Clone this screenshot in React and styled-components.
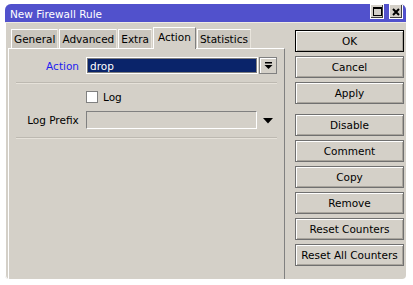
import React from 'react';
import styled, {createGlobalStyle} from "styled-components";

const GlobalStyle = createGlobalStyle`
    html, body {
        margin: 0;
        padding: 0;
        background: #ffffff;
    }
    body {
        font-family: "DejaVu Sans", Verdana, sans-serif;
        font-size: 10.5px;
    }
`

const Window = styled.div`
    margin: 4px 0 0 5px;
    width: 401px;
    height: 275px;
    background: #d4d0c8;
    border-radius: 6px 6px 4px 4px;
    overflow: hidden;
    display: flex;
    flex-direction: column;
    box-shadow: inset 1px 0 0 #ffffff;
`
const TitleBar = styled.div`
    height: 18px;
    flex: none;
    background: #5151cc;
    display: flex;
    align-items: center;
    padding: 0 3px 0 5px;
    color: #ffffff;
    font-size: 10.5px;
`
const Title = styled.span`
    flex: 1;
    line-height: 18px;
    padding-top: 1px;
`
const TitleButtons = styled.div`
    display: flex;
    gap: 5px;
    align-self: flex-start;
`
const TitleButton = styled.div`
    width: 12px;
    height: 13px;
    background: #d4d0c8;
    border: 1px solid #ffffff;
    box-shadow: inset -1px -1px 0 #404040;
    display: flex;
    align-items: center;
    justify-content: center;
`
const Body = styled.div`
    flex: 1;
    display: flex;
    padding: 3px 0 0 3px;
    border-top: 1px solid #eeeae2;
`
const LeftColumn = styled.div`
    width: 277px;
    display: flex;
    flex-direction: column;
`
const Tabs = styled.div`
    height: 22px;
    display: flex;
    align-items: flex-end;
    padding-left: 3px;
    gap: 1px;
`
const Tab = styled.div`
    height: ${p => p.$active ? 22 : 19}px;
    box-sizing: border-box;
    padding: 0 ${p => p.$active ? 4 : 2}px;
    display: flex;
    align-items: center;
    background: ${p => p.$active ? '#d4d0c8' : '#c9c5bd'};
    border-top: 1px solid #ffffff;
    border-left: 1px solid #ffffff;
    border-right: 1px solid ${p => p.$active ? '#808080' : '#e8e4dc'};
    margin-bottom: ${p => p.$active ? -1 : 0}px;
    padding-bottom: ${p => p.$active ? 3 : 0}px;
    position: relative;
    z-index: ${p => p.$active ? 1 : 0};
    color: #000000;
`
const Panel = styled.div`
    flex: 1;
    border-top: 1px solid #ffffff;
    border-left: 1px solid #ffffff;
    border-right: 1px solid #808080;
    padding: 0 7px;
    display: flex;
    flex-direction: column;
`
const Row = styled.div`
    display: flex;
    align-items: center;
    margin-top: ${p => p.$top}px;
`
const Label = styled.div`
    width: 63px;
    margin-right: 7px;
    text-align: right;
    color: ${p => p.$accent ? '#1c1cf0' : '#000000'};
`
const SelectField = styled.div`
    width: 172px;
    height: 17px;
    box-sizing: border-box;
    background: #0a246a;
    border: 1px solid #ffffff;
    box-shadow: inset 0 0 0 1px #7f7f7f;
    color: #ffffff;
    padding-left: 3px;
    display: flex;
    align-items: center;
`
const TextField = styled.div`
    width: 172px;
    height: 18px;
    box-sizing: border-box;
    border-top: 1px solid #808080;
    border-left: 1px solid #808080;
    border-bottom: 1px solid #ffffff;
    border-right: 1px solid #ffffff;
    background: #d4d0c8;
`
const DropButton = styled.div`
    width: 18px;
    height: 17px;
    margin-left: 1px;
    box-sizing: border-box;
    border: 1px solid #808080;
    box-shadow: inset 1px 1px 0 #ffffff;
    display: flex;
    align-items: center;
    justify-content: center;
`
const DropArrow = styled.div`
    width: 18px;
    margin-left: 2px;
    display: flex;
    justify-content: center;
    padding-top: 1px;
`
const Separator = styled.div`
    height: 0;
    border-top: 1px solid #bdb9b1;
    border-bottom: 1px solid #e6e2da;
    margin-top: ${p => p.$top}px;
`
const CheckRow = styled.div`
    display: flex;
    align-items: center;
    margin: 7px 0 0 70px;
    gap: 5px;
`
const CheckBox = styled.div`
    width: 12px;
    height: 12px;
    box-sizing: border-box;
    background: #ffffff;
    border: 1px solid #808080;
`
const RightColumn = styled.div`
    margin-left: 10px;
    padding-top: 4px;
    display: flex;
    flex-direction: column;
    gap: 4px;
`
const Button = styled.div`
    width: 109px;
    height: 22px;
    box-sizing: border-box;
    border: 1px solid ${p => p.$default ? '#000000' : '#707070'};
    box-shadow: inset 1px 1px 0 #ffffff, inset -1px -1px 0 #a9a59d;
    display: flex;
    align-items: center;
    justify-content: center;
    margin-top: ${p => p.$spaced ? 6 : 0}px;
    color: #000000;
`

const tabs = ['General', 'Advanced', 'Extra', 'Action', 'Statistics'];
const buttons = [
    {label: 'OK', def: true},
    {label: 'Cancel'},
    {label: 'Apply'},
    {label: 'Disable', spaced: true},
    {label: 'Comment'},
    {label: 'Copy'},
    {label: 'Remove'},
    {label: 'Reset Counters'},
    {label: 'Reset All Counters'},
];

const App = () => {
    return (
        <>
            <GlobalStyle/>
            <Window>
                <TitleBar>
                    <Title>New Firewall Rule</Title>
                    <TitleButtons>
                        <TitleButton>
                            <svg width="9" height="9" viewBox="0 0 9 9">
                                <rect x="0.5" y="0.5" width="8" height="8" fill="none" stroke="#000" strokeWidth="1"/>
                                <rect x="0" y="0" width="9" height="2" fill="#000"/>
                            </svg>
                        </TitleButton>
                        <TitleButton>
                            <svg width="8" height="8" viewBox="0 0 8 8">
                                <path d="M1 1 L7 7 M7 1 L1 7" stroke="#000" strokeWidth="2"/>
                            </svg>
                        </TitleButton>
                    </TitleButtons>
                </TitleBar>
                <Body>
                    <LeftColumn>
                        <Tabs>
                            {tabs.map(t => (
                                <Tab key={t} $active={t === 'Action'}>{t}</Tab>
                            ))}
                        </Tabs>
                        <Panel>
                            <Row $top={8}>
                                <Label $accent>Action</Label>
                                <SelectField>drop</SelectField>
                                <DropButton>
                                    <svg width="9" height="9" viewBox="0 0 9 9">
                                        <rect x="1" y="1" width="7" height="1.5" fill="#000"/>
                                        <polygon points="0.5,4 8.5,4 4.5,8" fill="#000"/>
                                    </svg>
                                </DropButton>
                            </Row>
                            <Separator $top={8}/>
                            <CheckRow>
                                <CheckBox/>
                                <span>Log</span>
                            </CheckRow>
                            <Row $top={8}>
                                <Label>Log Prefix</Label>
                                <TextField/>
                                <DropArrow>
                                    <svg width="10" height="6" viewBox="0 0 10 6">
                                        <polygon points="0,0 10,0 5,5.5" fill="#000"/>
                                    </svg>
                                </DropArrow>
                            </Row>
                            <Separator $top={8}/>
                        </Panel>
                    </LeftColumn>
                    <RightColumn>
                        {buttons.map(b => (
                            <Button key={b.label} $default={b.def} $spaced={b.spaced}>{b.label}</Button>
                        ))}
                    </RightColumn>
                </Body>
            </Window>
        </>
    );
};

export default App;
